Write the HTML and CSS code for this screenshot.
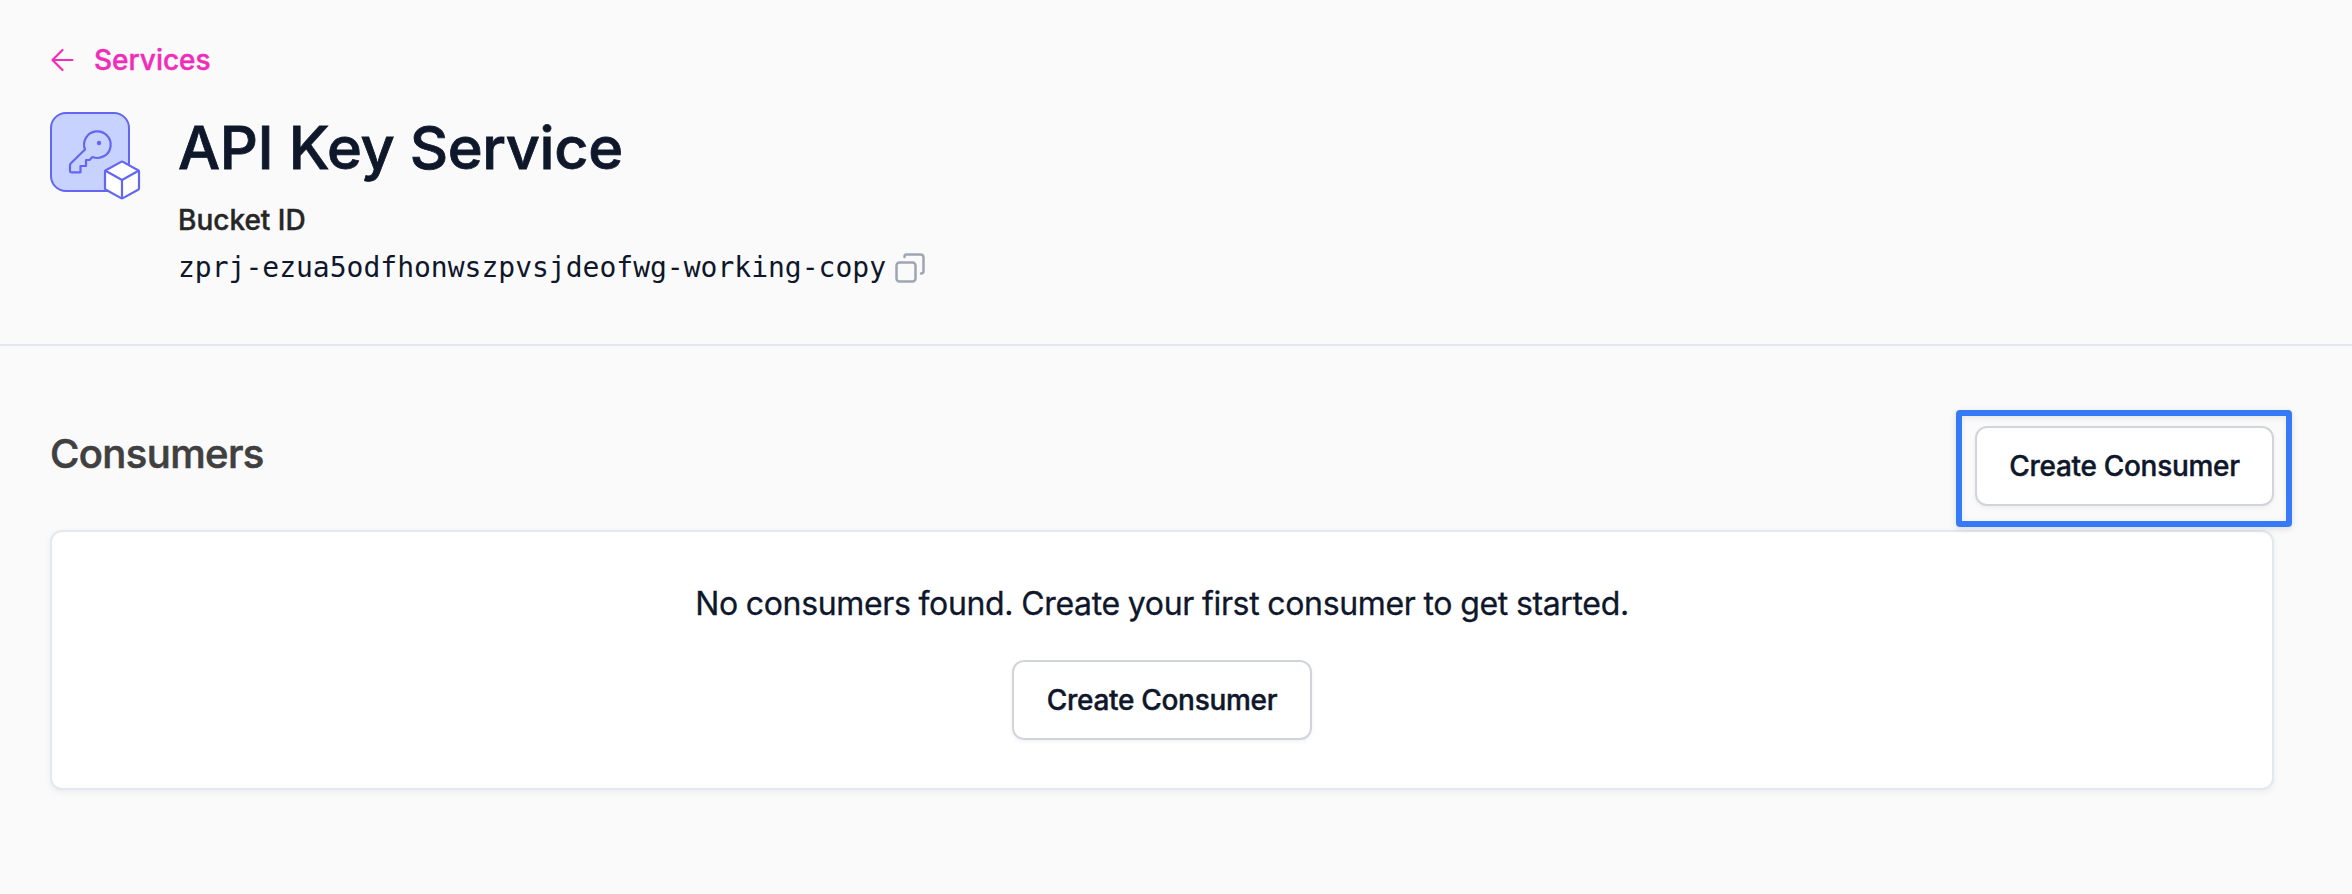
FILE: index.html
```html
<!DOCTYPE html>
<html lang="en">
<head>
<meta charset="utf-8">
<title>API Key Service</title>
<link rel="stylesheet" href="styles.css">
</head>
<body>
<header class="page-header">
  <a class="back-link">
    <svg class="back-icon" viewBox="0 0 24 24"><path d="M22.500 12H2.500M12.500 2L2.500 12l10 10"/></svg>
    <span>Services</span>
  </a>
  <div class="service">
    <div class="service-icon">
      <svg class="key-icon" viewBox="50 112 80 80">
        <path d="M85 149.500L70.700 163.500Q70 164.200 70 165.200V171Q70 172.300 71.300 172.300H80.500V166H86V160H89.500L92.500 157A13.300 13.300 0 1 0 85 149.500Z"/>
        <circle cx="99" cy="143" r="2.200"/>
      </svg>
      <svg class="cube-icon" viewBox="0 0 38 40"><path d="M17.100 1.900Q18 1.400 18.900 1.900L34.100 10.200Q35 10.700 35 11.700V28.300Q35 29.300 34.100 29.800L18.900 38.100Q18 38.600 17.100 38.100L1.900 29.800Q1 29.300 1 28.300V11.700Q1 10.700 1.900 10.200Z"/><path d="M1.500 10.700L18 20L34.500 10.700M18 20V38"/></svg>
    </div>
    <div class="service-info">
      <h1 class="title">API Key Service</h1>
      <div class="label">Bucket ID</div>
      <div class="bucket">
        <code class="bucket-id">zprj-ezua5odfhonwszpvsjdeofwg-working-copy</code>
        <svg class="copy-icon" viewBox="0 0 30 30"><rect x="1.500" y="9.500" width="19" height="19" rx="3"/><path d="M9.500 4V3.500Q9.500 1.500 11.500 1.500H25.500Q28.500 1.500 28.500 4.500V18Q28.500 20.500 26 20.500"/></svg>
      </div>
    </div>
  </div>
</header>
<main class="content">
  <div class="section-head">
    <h2 class="section-title">Consumers</h2>
    <div class="action">
      <button class="button button-compact">Create Consumer</button>
      <span class="highlight"></span>
    </div>
  </div>
  <section class="card">
    <p class="empty-text">No consumers found. Create your first consumer to get started.</p>
    <button class="button">Create Consumer</button>
  </section>
</main>
</body>
</html>
```
FILE: styles.css
```css
* { box-sizing: border-box; }
body {
  margin: 0;
  height: 894px;
  overflow: hidden;
  background: #fafafa;
  color: #0f172a;
  font-family: Inter, "Liberation Sans", sans-serif;
}
h1, h2, p { margin: 0; }
svg { display: block; fill: none; stroke-linecap: round; stroke-linejoin: round; }
.page-header { height: 346px; padding: 40px 50px 0; border-bottom: 2px solid #e2e8f0; }
.back-link {
  display: flex; align-items: center; gap: 20px; height: 40px;
  color: #f02cb9; font-size: 28px; font-weight: 500; line-height: 40px;
  -webkit-text-stroke: .4px;
}
.back-icon { width: 24px; height: 24px; stroke: #f02cb9; stroke-width: 2.2; }
.service { display: flex; gap: 48px; padding-top: 32px; }
.service-icon {
  position: relative; width: 80px; height: 80px;
  border: 2px solid #6366f1; border-radius: 16px; background: #c7d2fe;
}
.key-icon { width: 80px; height: 80px; margin: -2px; stroke: #6366f1; stroke-width: 2.2; }
.key-icon circle { fill: #6366f1; stroke: none; }
.cube-icon {
  position: absolute; left: 52px; top: 46px; width: 38px; height: 40px;
  fill: #fff; stroke: #6366f1; stroke-width: 2.2; overflow: visible;
}
.title { margin-top: 5px; font-size: 59.500px; font-weight: 500; line-height: 60px; letter-spacing: -.4px; -webkit-text-stroke: .8px; }
.label { margin-top: 23px; color: #262626; font-size: 28px; font-weight: 500; line-height: 40px; -webkit-text-stroke: .4px; }
.bucket { display: flex; align-items: center; gap: 9px; height: 56px; }
.bucket-id { font-family: "DejaVu Sans Mono", monospace; font-size: 28px; line-height: 40px; }
.copy-icon { width: 30px; height: 30px; stroke: #a0a5b3; stroke-width: 2.5; }
.content { padding: 80px 78px 0 50px; }
.section-head { display: flex; justify-content: space-between; height: 104px; }
.section-title { color: #404040; font-size: 40px; font-weight: 500; line-height: 56px; letter-spacing: -.6px; -webkit-text-stroke: .6px; }
.action { position: relative; height: 80px; }
.button {
  width: 300px; height: 80px; padding: 0;
  border: 2px solid #d1d5db; border-radius: 12px; background: #fff;
  box-shadow: 0 2px 4px rgba(0, 0, 0, .05);
  color: #0f172a; font: 500 28px/40px Inter, "Liberation Sans", sans-serif; letter-spacing: -.3px;
  -webkit-text-stroke: .4px;
}
.button-compact { width: 299px; }
.highlight {
  position: absolute; left: -19px; top: -16px; width: 336px; height: 117px;
  border: 6px solid #357af6; border-radius: 4px;
  box-shadow: 0 2px 6px rgba(0, 0, 0, .12), inset 0 2px 6px rgba(0, 0, 0, .08);
}
.card {
  display: flex; flex-direction: column; align-items: center; gap: 32px;
  height: 260px; padding-top: 48px;
  border: 2px solid #e2e8f0; border-radius: 12px; background: #fff;
  box-shadow: 0 2px 6px rgba(0, 0, 0, .06);
}
.empty-text { font-size: 32px; line-height: 48px; letter-spacing: -.35px; word-spacing: -.6px; -webkit-text-stroke: .3px; }
```
